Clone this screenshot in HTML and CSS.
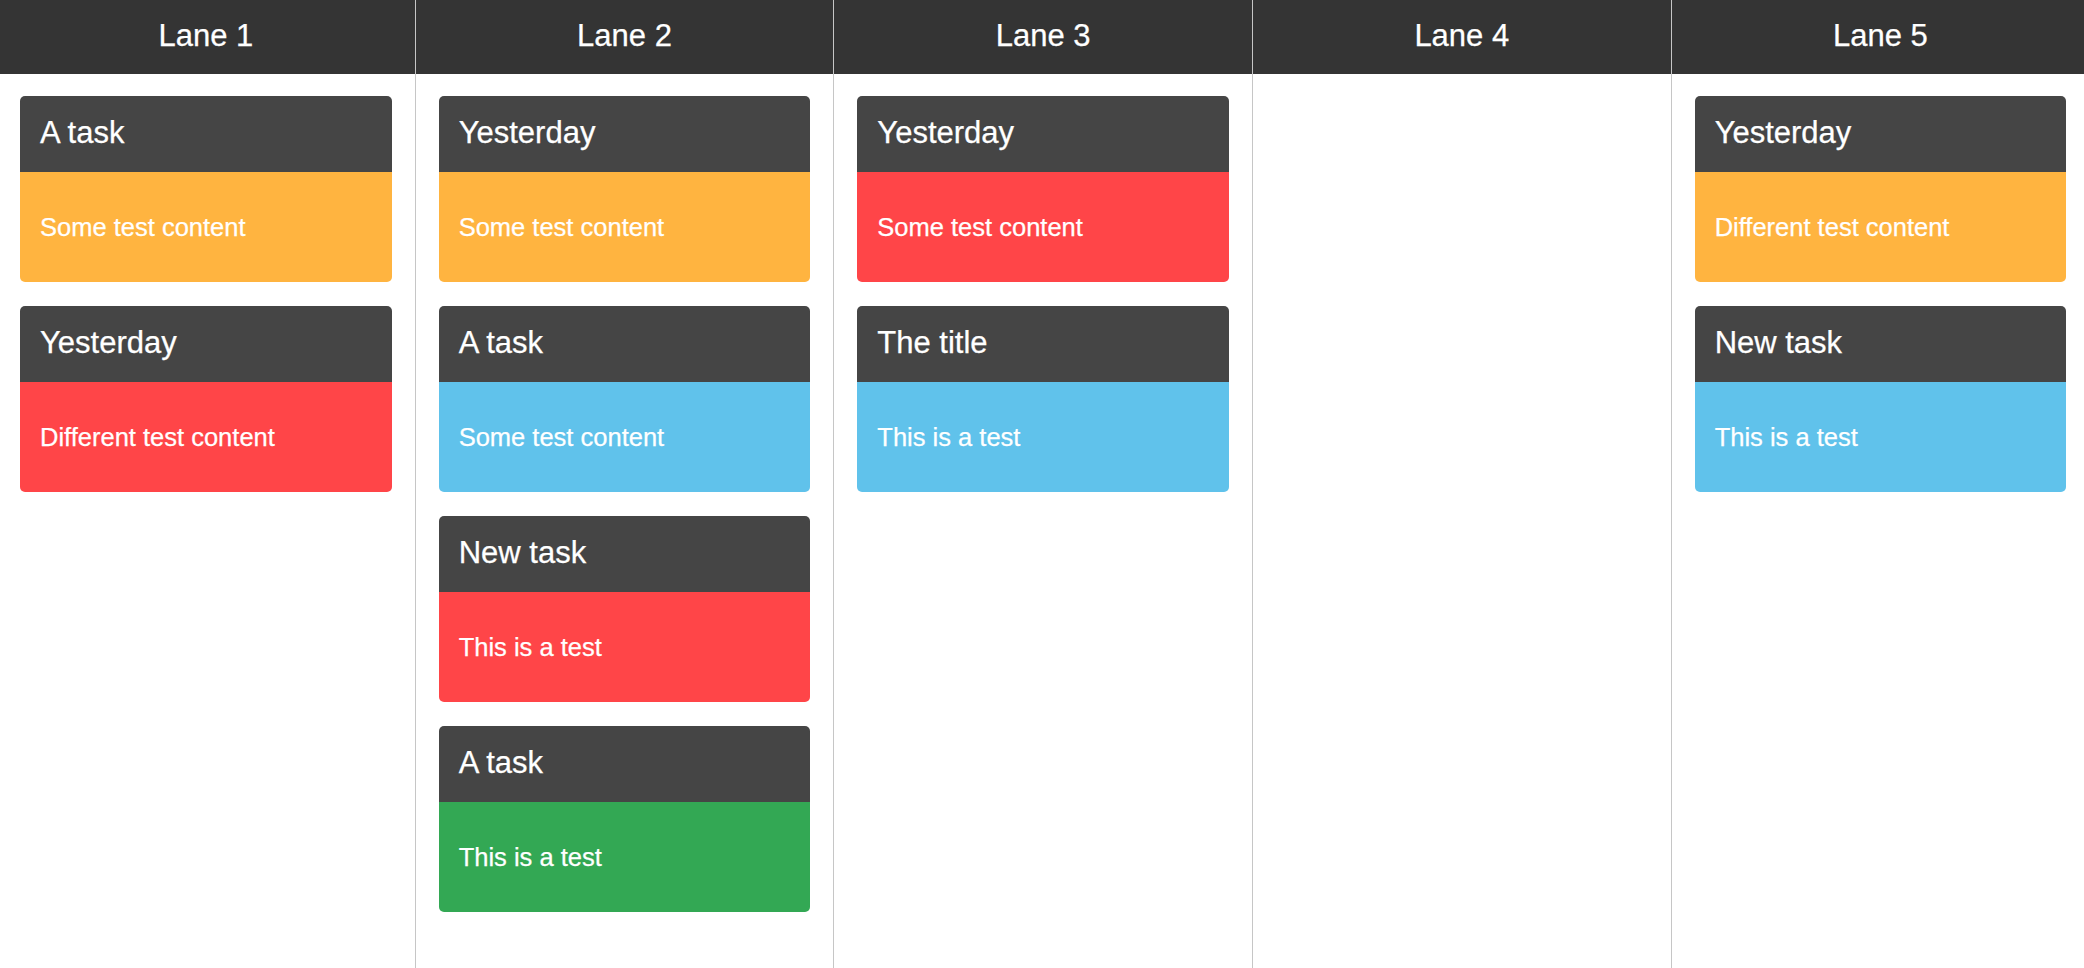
FILE: index.html
```html
<!DOCTYPE html>
<html lang="en">
<head>
<meta charset="utf-8">
<title>Lanes</title>
<link rel="stylesheet" href="styles.css">
</head>
<body>
<div class="board">
  <section class="lane">
    <header class="lane-header">Lane 1</header>
    <div class="lane-cards">
      <article class="card"><h2 class="card-title">A task</h2><div class="card-body orange">Some test content</div></article>
      <article class="card"><h2 class="card-title">Yesterday</h2><div class="card-body red">Different test content</div></article>
    </div>
  </section>
  <section class="lane">
    <header class="lane-header">Lane 2</header>
    <div class="lane-cards">
      <article class="card"><h2 class="card-title">Yesterday</h2><div class="card-body orange">Some test content</div></article>
      <article class="card"><h2 class="card-title">A task</h2><div class="card-body blue">Some test content</div></article>
      <article class="card"><h2 class="card-title">New task</h2><div class="card-body red">This is a test</div></article>
      <article class="card"><h2 class="card-title">A task</h2><div class="card-body green">This is a test</div></article>
    </div>
  </section>
  <section class="lane">
    <header class="lane-header">Lane 3</header>
    <div class="lane-cards">
      <article class="card"><h2 class="card-title">Yesterday</h2><div class="card-body red">Some test content</div></article>
      <article class="card"><h2 class="card-title">The title</h2><div class="card-body blue">This is a test</div></article>
    </div>
  </section>
  <section class="lane">
    <header class="lane-header">Lane 4</header>
    <div class="lane-cards"></div>
  </section>
  <section class="lane">
    <header class="lane-header">Lane 5</header>
    <div class="lane-cards">
      <article class="card"><h2 class="card-title">Yesterday</h2><div class="card-body orange">Different test content</div></article>
      <article class="card"><h2 class="card-title">New task</h2><div class="card-body blue">This is a test</div></article>
    </div>
  </section>
</div>
</body>
</html>
```
FILE: styles.css
```css
* { box-sizing: border-box; }
html, body {
  margin: 0;
  padding: 0;
  height: 100%;
  overflow: hidden;
  background: #fff;
  font-family: "Liberation Sans", Arial, Helvetica, sans-serif;
  color: #fff;
  -webkit-text-stroke: 0.25px #fff;
}
.board {
  display: flex;
  height: 968px;
  margin-left: -3px;
}
.lane {
  flex: 0 0 418.67px;
  display: flex;
  flex-direction: column;
  border-right: 1px solid #c6c6c6;
}
.lane-header {
  height: 74px;
  flex: 0 0 74px;
  background: #343434;
  display: flex;
  align-items: center;
  justify-content: center;
  font-size: 31px;
  padding-bottom: 2px;
}
.lane-cards {
  display: flex;
  flex-direction: column;
  gap: 24px;
  padding: 22px 23px 0 23px;
}
.card {
  border-radius: 5px;
  overflow: hidden;
}
.card-title {
  margin: 0;
  height: 76px;
  display: flex;
  align-items: center;
  padding: 0 20px 2px 20px;
  background: #454545;
  font-size: 31px;
  font-weight: normal;
}
.card-body {
  height: 110px;
  display: flex;
  align-items: center;
  padding: 0 20px;
  font-size: 25.5px;
}
.orange { background: #ffb440; }
.red { background: #ff4548; }
.blue { background: #60c2eb; }
.green { background: #33a854; }
```
